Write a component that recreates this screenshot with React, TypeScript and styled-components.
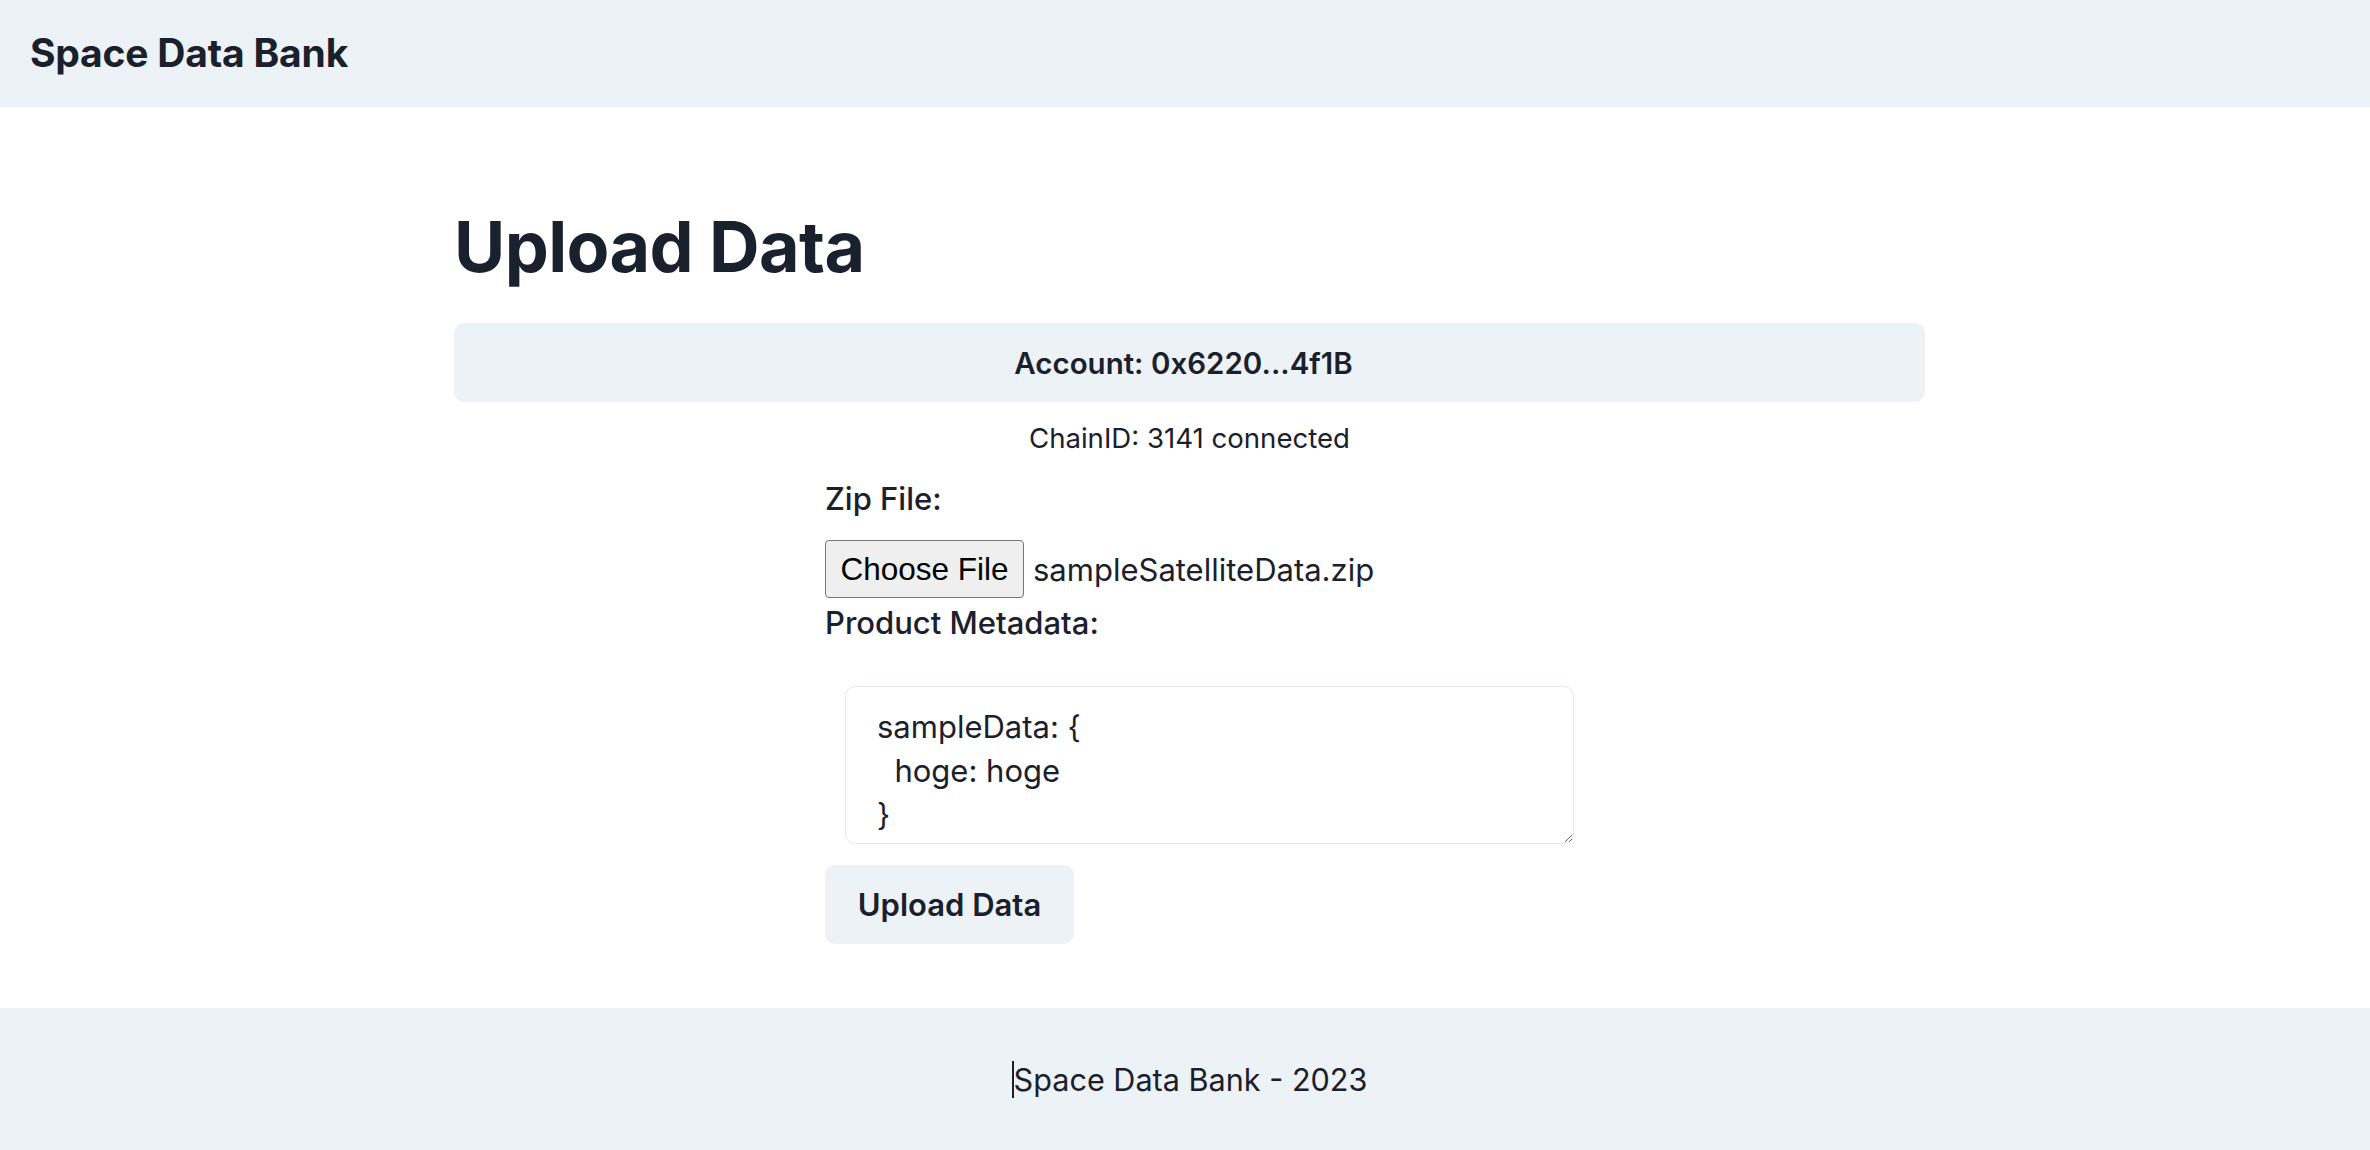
import styled, { createGlobalStyle } from 'styled-components'

const GlobalStyle = createGlobalStyle`
  html, body {
    margin: 0;
    padding: 0;
    background: #ffffff;
  }
  body {
    font-family: Inter, "Noto Sans", sans-serif;
    color: #1a202c;
  }
`

const Page = styled.div`
  display: flex;
  flex-direction: column;
  min-height: 1150px;
`

const Header = styled.header`
  display: flex;
  align-items: center;
  height: 107px;
  padding: 0 30px;
  background-color: #edf2f7;
  box-sizing: border-box;
`

const Brand = styled.h2`
  margin: 0;
  font-size: 39px;
  font-weight: 700;
  line-height: 1.2;
  letter-spacing: -0.2px;
`

const Main = styled.main`
  flex: 1;
  display: flex;
  justify-content: center;
  padding-left: 9px;
`

const Container = styled.div`
  display: flex;
  flex-direction: column;
  width: 1471px;
  padding-top: 98px;
  padding-bottom: 40px;
`

const Title = styled.h1`
  margin: 0 0 34px;
  font-size: 70px;
  font-weight: 700;
  line-height: 1.2;
  letter-spacing: -0.6px;
`

const AccountBar = styled.button`
  display: flex;
  align-items: center;
  justify-content: center;
  width: 100%;
  height: 79px;
  padding: 0 12px 0 0;
  border: none;
  border-radius: 10px;
  background-color: #edf2f7;
  color: #1a202c;
  font-family: Inter, sans-serif;
  font-size: 29.5px;
  font-weight: 600;
`

const Chain = styled.p`
  margin: 16px 0 0;
  text-align: center;
  font-size: 27.6px;
  line-height: 40px;
`

const Form = styled.form`
  display: flex;
  flex-direction: column;
  width: 768px;
  margin-left: 371px;
  margin-top: 20px;
`

const Label = styled.label<{ $gap?: number }>`
  display: block;
  margin-top: ${(p) => p.$gap ?? 0}px;
  font-size: 31px;
  font-weight: 500;
  line-height: 42px;
`

const FileRow = styled.div`
  display: flex;
  align-items: center;
  gap: 9px;
  margin-top: 20px;
`

const FileButton = styled.span`
  display: inline-flex;
  align-items: center;
  justify-content: center;
  width: 199px;
  height: 58px;
  box-sizing: border-box;
  border: 1.5px solid #767676;
  border-radius: 4px;
  background-color: #efefef;
  color: #000000;
  font-family: "Liberation Sans", Arial, sans-serif;
  font-size: 31.5px;
`

const FileName = styled.span`
  font-size: 31px;
  color: #1a202c;
`

const MetaText = styled.textarea`
  display: block;
  width: 729px;
  height: 158px;
  box-sizing: border-box;
  margin: 42px 0 0 20px;
  padding: 18px 22px 0 31px;
  border: 1.5px solid #e2e8f0;
  border-radius: 10px;
  font-family: Inter, sans-serif;
  font-size: 31px;
  line-height: 44px;
  color: #1a202c;
  resize: vertical;
  overflow: hidden;
  outline: none;
`

const SubmitButton = styled.button`
  align-self: flex-start;
  height: 79px;
  width: 249px;
  margin-top: 21px;
  border: none;
  border-radius: 10px;
  background-color: #edf2f7;
  color: #1a202c;
  font-family: Inter, sans-serif;
  font-size: 31px;
  font-weight: 600;
`

const Footer = styled.footer`
  display: flex;
  align-items: center;
  justify-content: center;
  height: 142px;
  padding-left: 9px;
  background-color: #edf2f7;
  font-size: 30.6px;
`

const Caret = styled.span`
  display: inline-block;
  width: 2px;
  height: 37px;
  background-color: #1a202c;
`

export default function App() {
  const metadata = 'sampleData: {\n  hoge: hoge\n}'
  return (
    <Page>
      <GlobalStyle />
      <Header>
        <Brand>Space Data Bank</Brand>
      </Header>
      <Main>
        <Container>
          <Title>Upload Data</Title>
          <AccountBar type="button">Account: 0x6220...4f1B</AccountBar>
          <Chain>ChainID: 3141 connected</Chain>
          <Form onSubmit={(e) => e.preventDefault()}>
            <Label>Zip File:</Label>
            <FileRow>
              <FileButton>Choose File</FileButton>
              <FileName>sampleSatelliteData.zip</FileName>
            </FileRow>
            <Label $gap={4}>Product Metadata:</Label>
            <MetaText defaultValue={metadata} />
            <SubmitButton type="submit">Upload Data</SubmitButton>
          </Form>
        </Container>
      </Main>
      <Footer>
        <Caret />
        Space Data Bank - 2023
      </Footer>
    </Page>
  )
}
